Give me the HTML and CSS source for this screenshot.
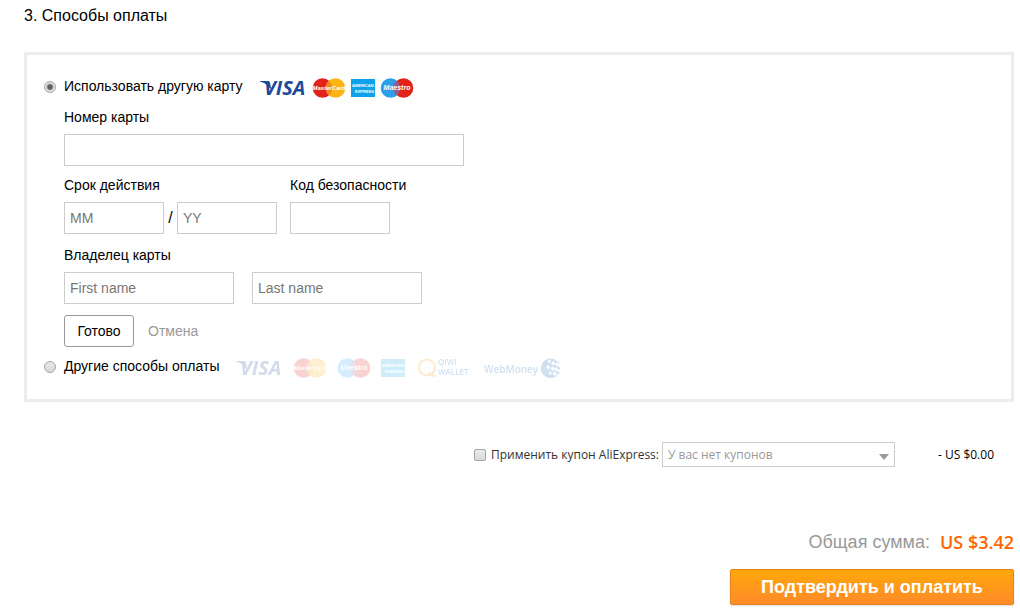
FILE: index.html
```html
<!DOCTYPE html>
<html lang="ru">
<head>
    <meta charset="UTF-8">
    <meta name="viewport" content="width=device-width, initial-scale=1.0">
    <title>Способы оплаты</title>
    <link rel="stylesheet" href="styles.css">
</head>
<body>
    <form class="payment">
        <h2 class="payment-title">3. Способы оплаты</h2>

        <div class="payment-box">
            <div class="option">
                <input type="radio" class="radio" name="method" id="method-card" checked>
                <label for="method-card">Использовать другую карту</label>
                <div class="logos">
                    <svg class="logo-visa" viewBox="0 0 48 20">
                        <path d="M1 3h7.500q2.200 0 2.600 2l1 6-1.600-1Q7 5 1 3.600z" fill="#1b4b9b"/>
                        <text x="5" y="17" class="visa-text">VISA</text>
                    </svg>
                    <svg class="logo-card" viewBox="0 0 34 20">
                        <circle cx="10.500" cy="10" r="9.800" fill="#e2231a"/>
                        <circle cx="23.500" cy="10" r="9.800" fill="#fbb413"/>
                        <path d="M17 2.700a9.800 9.800 0 0 1 0 14.600a9.800 9.800 0 0 1 0-14.600z" fill="#f08a1c"/>
                        <text x="17" y="12" class="card-text mc-text">MasterCard</text>
                    </svg>
                    <svg class="logo-amex" viewBox="0 0 24 18">
                        <rect width="24" height="18" fill="#0fa2e8"/>
                        <text x="1" y="8" class="amex-text">AMERICAN</text>
                        <text x="4" y="14" class="amex-text">EXPRESS</text>
                    </svg>
                    <svg class="logo-card" viewBox="0 0 34 20">
                        <circle cx="10.500" cy="10" r="9.800" fill="#2b9fe8"/>
                        <circle cx="23.500" cy="10" r="9.800" fill="#e2231a"/>
                        <path d="M17 2.700a9.800 9.800 0 0 1 0 14.600a9.800 9.800 0 0 1 0-14.600z" fill="#9a5a8c"/>
                        <text x="17" y="12" class="card-text maestro-text">Maestro</text>
                    </svg>
                </div>
            </div>

            <div class="card-form">
                <div class="field field-number">
                    <label for="card-number">Номер карты</label>
                    <input type="text" class="input input-number" id="card-number">
                </div>
                <div class="field-row">
                    <div class="field">
                        <label for="exp-month">Срок действия</label>
                        <div class="expiry">
                            <input type="text" class="input input-short" id="exp-month" placeholder="MM">
                            <span>/</span>
                            <input type="text" class="input input-short" id="exp-year" placeholder="YY" aria-label="Год">
                        </div>
                    </div>
                    <div class="field">
                        <label for="cvc">Код безопасности</label>
                        <input type="text" class="input input-short" id="cvc">
                    </div>
                </div>
                <div class="field">
                    <label for="first-name">Владелец карты</label>
                    <div class="holder">
                        <input type="text" class="input input-name" id="first-name" placeholder="First name">
                        <input type="text" class="input input-name" id="last-name" placeholder="Last name" aria-label="Фамилия">
                    </div>
                </div>
                <div class="actions">
                    <button type="button" class="btn-done">Готово</button>
                    <a href="#" class="cancel">Отмена</a>
                </div>
            </div>

            <div class="option">
                <input type="radio" class="radio" name="method" id="method-other">
                <label for="method-other">Другие способы оплаты</label>
                <div class="logos logos-muted">
                    <svg class="logo-visa" viewBox="0 0 48 20">
                        <path d="M1 3h7.500q2.200 0 2.600 2l1 6-1.600-1Q7 5 1 3.600z" fill="#1b4b9b"/>
                        <text x="5" y="17" class="visa-text">VISA</text>
                    </svg>
                    <svg class="logo-card" viewBox="0 0 34 20">
                        <circle cx="10.500" cy="10" r="9.800" fill="#e2231a"/>
                        <circle cx="23.500" cy="10" r="9.800" fill="#fbb413"/>
                        <path d="M17 2.700a9.800 9.800 0 0 1 0 14.600a9.800 9.800 0 0 1 0-14.600z" fill="#f08a1c"/>
                        <text x="17" y="12" class="card-text mc-text">MasterCard</text>
                    </svg>
                    <svg class="logo-card" viewBox="0 0 34 20">
                        <circle cx="10.500" cy="10" r="9.800" fill="#2b9fe8"/>
                        <circle cx="23.500" cy="10" r="9.800" fill="#e2231a"/>
                        <path d="M17 2.700a9.800 9.800 0 0 1 0 14.600a9.800 9.800 0 0 1 0-14.600z" fill="#9a5a8c"/>
                        <text x="17" y="12" class="card-text maestro-text">Maestro</text>
                    </svg>
                    <svg class="logo-amex" viewBox="0 0 24 18">
                        <rect width="24" height="18" fill="#0fa2e8"/>
                        <text x="1" y="8" class="amex-text">AMERICAN</text>
                        <text x="4" y="14" class="amex-text">EXPRESS</text>
                    </svg>
                    <svg class="logo-qiwi" viewBox="0 0 56 20">
                        <circle cx="12" cy="9.500" r="8" fill="none" stroke="#f8981d" stroke-width="2.200"/>
                        <path d="M12 14q5 0 10 4.500q-7 1.500-10-4.500z" fill="#f8981d"/>
                        <text x="23" y="7" class="qiwi-text">QIWI</text>
                        <text x="23" y="17" class="qiwi-text">WALLET</text>
                    </svg>
                    <svg class="logo-webmoney" viewBox="0 0 80 20">
                        <text x="3" y="15" class="wm-text">WebMoney</text>
                        <path d="M75 2A9.800 9.800 0 1 0 75 18.500L77 15V5z" fill="#1565b0"/>
                        <g fill="#fff">
                            <path d="M68 1.500l2 1.500-1.500 2-2-1.500zM72 3l2.500 2-2 2.500-2.500-2zM67 7l2.500 2-2 2.500-2.500-2zM71.500 8.500l2.500 2-2 2.500-2.500-2zM69 13.500l2 1.500-1.500 2-2-1.500zM73.500 13.500l2.500 2-2 2.500-2.500-2zM76 4l2.500 2-2 2.500-2.500-2zM75.500 9l2.500 2-2 2.500-2.500-2z"/>
                        </g>
                        <path d="M77.500 8.500l2 1.500-1.500 2-2-1.500zM77 3.500l1.500 1-1 1.500-1.500-1zM77.500 14l1.500 1-1 1.500-1.500-1z" fill="#1565b0"/>
                    </svg>
                </div>
            </div>
        </div>

        <div class="coupon">
            <input type="checkbox" class="checkbox" id="use-coupon">
            <label for="use-coupon">Применить купон AliExpress:</label>
            <div class="select-wrap">
                <select class="select" aria-label="Купон">
                    <option>У вас нет купонов</option>
                </select>
            </div>
            <span class="discount">- US $0.00</span>
        </div>

        <div class="total">
            <span class="total-label">Общая сумма:</span>
            <span class="total-price">US $3.42</span>
        </div>
        <button type="submit" class="btn-pay">Подтвердить и оплатить</button>
    </form>
</body>
</html>
```
FILE: styles.css
```css
body {
    margin: 0;
    background: #fff;
    color: #000;
    font-family: "Liberation Sans", Arial, sans-serif;
    font-size: 14px;
    line-height: 20px;
}

input, select, button {
    box-sizing: border-box;
    margin: 0;
    font-family: inherit;
}

.payment {
    display: flex;
    flex-direction: column;
    padding: 6px 6px 6px 24px;
}

.payment-title {
    margin: 0 0 26px;
    font-size: 16px;
    font-weight: 400;
    line-height: 20px;
}

/* payment methods */
.payment-box {
    padding: 20px 17px;
    border: 3px solid #ededed;
}

.option {
    display: flex;
    align-items: center;
    height: 24px;
}

.option label {
    margin: 0 16px 0 8px;
    padding-bottom: 2px;
}

.radio {
    appearance: none;
    width: 12px;
    height: 12px;
    border: 1px solid #a5a5a5;
    border-radius: 50%;
    background: linear-gradient(#e8e8e8, #d8d8d8);
}

.radio:checked {
    background: radial-gradient(circle, #606060 0, #606060 2px, #e4e4e4 4px);
}

.logos {
    display: flex;
    align-items: center;
    gap: 5px;
    padding-top: 2px;
}

.logos-muted {
    gap: 10px;
    opacity: 0.2;
}

.logo-visa { width: 48px; height: 20px; }
.logo-card { width: 34px; height: 20px; }
.logo-amex { width: 24px; height: 18px; }
.logo-qiwi { width: 56px; height: 20px; }
.logo-webmoney { width: 80px; height: 20px; }

.visa-text {
    font: italic bold 20px "Open Sans", sans-serif;
    fill: #1b4b9b;
}

.card-text {
    font-family: "Liberation Sans", Arial, sans-serif;
    font-style: italic;
    font-weight: bold;
    fill: #fff;
    text-anchor: middle;
}

.mc-text { font-size: 6px; }
.maestro-text { font-size: 7px; }

.amex-text {
    font: bold 4px "Liberation Sans", Arial, sans-serif;
    fill: #fff;
}

.qiwi-text {
    font: 600 8px "Open Sans", sans-serif;
    fill: #1565b0;
}

.wm-text {
    font: 600 10px "Open Sans", sans-serif;
    fill: #1565b0;
}

/* new card form */
.card-form {
    display: flex;
    flex-direction: column;
    gap: 11px;
    padding: 8px 0 8px 20px;
}

.field {
    display: flex;
    flex-direction: column;
    align-items: flex-start;
    gap: 7px;
}

.field-number {
    margin-bottom: -2px;
}

.field-row {
    display: flex;
    gap: 13px;
}

.expiry {
    display: flex;
    align-items: center;
    font-size: 16px;
}

.expiry span {
    width: 13px;
    text-align: center;
}

.holder {
    display: flex;
    gap: 18px;
}

.input {
    height: 32px;
    padding: 0 5px;
    border: 1px solid #ccc;
    background: #fff;
    font-size: 14px;
}

.input::placeholder {
    color: #777;
}

.input-number { width: 400px; }
.input-short { width: 100px; }
.input-name { width: 170px; }

.actions {
    display: flex;
    align-items: center;
    gap: 14px;
}

.btn-done {
    width: 70px;
    height: 32px;
    padding: 0;
    border: 1px solid #999;
    border-radius: 3px;
    background: #fff;
    color: #000;
    font-size: 14px;
}

.cancel {
    color: #999;
    text-decoration: none;
}

/* coupon */
.coupon {
    display: flex;
    justify-content: flex-end;
    align-items: center;
    margin-top: 40px;
    padding-right: 20px;
    font-family: "Open Sans", sans-serif;
    font-size: 12px;
}

.coupon label {
    margin: 0 3px 0 5px;
    color: #333;
}

.checkbox {
    appearance: none;
    width: 12px;
    height: 12px;
    border: 1px solid #a5a5a5;
    border-radius: 2px;
    background: linear-gradient(#ececec, #d8d8d8);
}

.select-wrap {
    position: relative;
}

.select-wrap::after {
    content: "";
    position: absolute;
    top: 12px;
    right: 6px;
    border: 5px solid transparent;
    border-top: 6px solid #999;
    border-bottom: 0;
    pointer-events: none;
}

.select {
    appearance: none;
    display: block;
    width: 233px;
    height: 25px;
    padding: 0 20px 0 5px;
    border: 1px solid #ccc;
    border-radius: 0;
    background: #fff;
    color: #999;
    font-size: 12px;
}

.discount {
    min-width: 99px;
    text-align: right;
}

/* total */
.total {
    display: flex;
    justify-content: flex-end;
    align-items: center;
    gap: 10px;
    margin: 63px 0 15px;
    font-size: 18px;
    line-height: 24px;
}

.total-label {
    color: #999;
}

.total-price {
    color: #f60;
    font-family: "Open Sans", sans-serif;
    font-weight: 600;
}

.btn-pay {
    align-self: flex-end;
    width: 284px;
    height: 36px;
    padding: 0;
    border: 1px solid #e8821a;
    border-radius: 2px;
    background: linear-gradient(#ffa80a, #ff8a2a);
    box-shadow: 0 1px 2px rgba(0, 0, 0, 0.15);
    color: #fff;
    font-size: 18px;
    font-weight: bold;
}
```
